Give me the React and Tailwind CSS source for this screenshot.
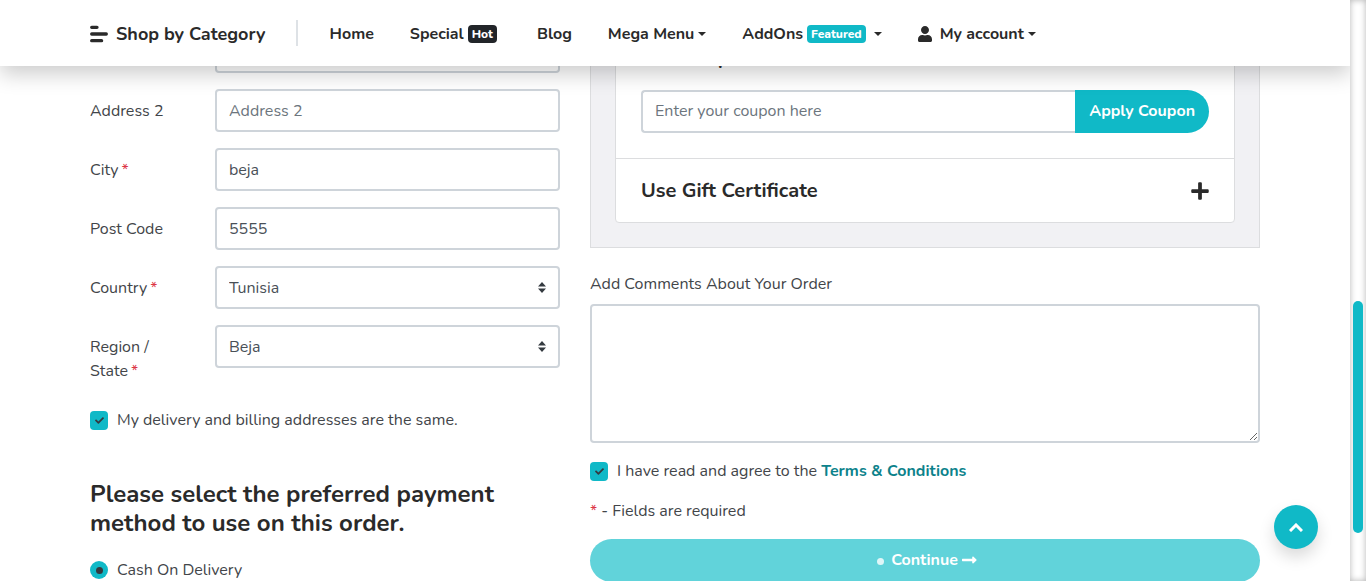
import React from "react";
import { FaUser, FaPlus, FaCheck } from "react-icons/fa";

const control =
  "block h-[43px] w-full rounded border-2 border-[#ced4da] bg-white px-3 text-base text-[#495057] placeholder:text-[#6c757d]";

function Caret() {
  return (
    <svg className="h-1 w-2 shrink-0" viewBox="0 0 8 4" fill="currentColor" aria-hidden="true">
      <path d="M0 0h8L4 4z" />
    </svg>
  );
}

function NavLink({ children }) {
  return (
    <a href="#" className="flex items-center whitespace-nowrap">
      {children}
    </a>
  );
}

function Required() {
  return <span className="text-[#dc3545]">*</span>;
}

function RequiredLabel({ children }) {
  return (
    <>
      {children}
      <span className="ml-[3px] text-[#dc3545]">*</span>
    </>
  );
}

function Row({ id, label, children }) {
  return (
    <div className="grid grid-cols-[95px_1fr] items-start gap-x-[30px]">
      <label htmlFor={id} className="pt-[10px]">
        {label}
      </label>
      {children}
    </div>
  );
}

function Select({ id, value }) {
  return (
    <div className="relative">
      <select id={id} defaultValue={value} className={control + " appearance-none pr-8"}>
        <option>{value}</option>
      </select>
      <svg
        className="pointer-events-none absolute top-4 right-[14px] h-[11px] w-2"
        viewBox="0 0 8 10"
        preserveAspectRatio="none"
        fill="#343a40"
        aria-hidden="true"
      >
        <path d="M4 0 0 4h8zM0 6l4 4 4-4z" />
      </svg>
    </div>
  );
}

function Tick({ id, children }) {
  return (
    <div className="flex items-center gap-[9px]">
      <span className="grid place-items-center">
        <input
          id={id}
          type="checkbox"
          defaultChecked
          className="col-start-1 row-start-1 h-[19px] w-[18px] appearance-none rounded bg-[#10b9c7]"
        />
        <FaCheck className="pointer-events-none col-start-1 row-start-1 size-[9px] text-[#343a40]" />
      </span>
      <label htmlFor={id}>{children}</label>
    </div>
  );
}

function Header() {
  return (
    <header className="relative z-10 h-[66px] shrink-0 bg-white text-[#2a2a2a] shadow-[0_8px_20px_rgba(0,0,0,0.2)]">
      <div className="mx-auto flex h-full w-full max-w-[1200px] items-center px-[15px] pt-0.5 font-bold">
        <button type="button" className="flex items-center gap-2 text-lg whitespace-nowrap">
          <svg className="h-[18px] w-[18px]" viewBox="0 0 18 18" stroke="currentColor" strokeWidth="3.3" strokeLinecap="round" aria-hidden="true">
            <path d="M1.700 2.300h5.300M1.700 9h14.600M1.700 15.700h9.900" />
          </svg>
          Shop by Category
        </button>
        <span className="mb-0.5 ml-[30px] h-[26px] w-0.5 bg-[#dee2e6]" />
        <nav className="ml-8 flex items-center gap-9">
          <NavLink>Home</NavLink>
          <NavLink>
            Special
            <span className="mr-1 ml-1 rounded bg-[#222529] px-1 text-xs leading-[18px] font-extrabold text-white">Hot</span>
          </NavLink>
          <NavLink>Blog</NavLink>
          <NavLink>
            <span className="mr-1">Mega Menu</span>
            <Caret />
          </NavLink>
          <NavLink>
            AddOns
            <span className="mr-2 ml-1 rounded bg-[#10b9c7] px-1 text-xs leading-[18px] font-extrabold text-white">Featured</span>
            <Caret />
          </NavLink>
          <NavLink>
            <FaUser className="mr-2 h-4 w-[14px]" />
            <span className="mr-1">My account</span>
            <Caret />
          </NavLink>
        </nav>
      </div>
    </header>
  );
}

function AddressForm() {
  return (
    <section className="col-span-5 px-[15px] pt-[37px]">
      <div className="flex flex-col gap-4">
        <div className="pl-[125px]">
          <input aria-label="Address 1" type="text" className={control} />
        </div>
        <Row id="address2" label="Address 2">
          <input id="address2" type="text" placeholder="Address 2" className={control} />
        </Row>
        <Row id="city" label={<RequiredLabel>City</RequiredLabel>}>
          <input id="city" type="text" defaultValue="beja" className={control} />
        </Row>
        <Row id="postcode" label="Post Code">
          <input id="postcode" type="text" defaultValue="5555" className={control} />
        </Row>
        <Row id="country" label={<RequiredLabel>Country</RequiredLabel>}>
          <Select id="country" value="Tunisia" />
        </Row>
        <Row id="region" label={<RequiredLabel>Region / State</RequiredLabel>}>
          <Select id="region" value="Beja" />
        </Row>
      </div>
      <div className="mt-[25px]">
        <Tick id="same">My delivery and billing addresses are the same.</Tick>
      </div>
      <h2 className="mt-12 text-2xl leading-[29px] font-bold text-[#2a2a2a]">
        Please select the preferred payment method to use on this order.
      </h2>
      <div className="mt-5 flex items-center gap-[9px]">
        <span className="grid place-items-center">
          <input
            id="cod"
            type="radio"
            name="payment"
            defaultChecked
            className="col-start-1 row-start-1 size-[18px] appearance-none rounded-full bg-[#10b9c7]"
          />
          <span className="pointer-events-none col-start-1 row-start-1 size-[7px] rounded-full bg-[#343a40]" />
        </span>
        <label htmlFor="cod">Cash On Delivery</label>
      </div>
    </section>
  );
}

function OrderPanel() {
  return (
    <section className="col-span-7 px-[15px]">
      <div className="border border-[#dcdddf] bg-[#f1f1f4] p-6">
        <div className="rounded border border-[#dcdddf] bg-white">
          <div className="px-[25px] pt-[27px] pb-[25px]">
            <h3>
              <label htmlFor="coupon" className="block text-xl leading-6 font-bold text-[#2a2a2a]">
                Use Coupon Code
              </label>
            </h3>
            <div className="mt-5 flex">
              <input
                id="coupon"
                type="text"
                placeholder="Enter your coupon here"
                className="h-[43px] min-w-0 flex-1 rounded-l border-2 border-r-0 border-[#ced4da] px-3 pb-0.5 placeholder:text-[#6c757d]"
              />
              <button type="button" className="h-[43px] rounded-r-full bg-[#10b9c7] px-[14px] pb-0.5 font-bold whitespace-nowrap text-white">
                Apply Coupon
              </button>
            </div>
          </div>
          <button
            type="button"
            className="flex h-16 w-full items-center justify-between border-t border-[#dcdddf] px-[25px] text-xl font-bold text-[#2a2a2a]"
          >
            Use Gift Certificate
            <FaPlus className="h-5 w-[18px]" aria-hidden="true" />
          </button>
        </div>
      </div>
      <label htmlFor="comments" className="mt-6 mb-2 block">
        Add Comments About Your Order
      </label>
      <textarea id="comments" className="block h-[139px] w-full resize rounded border-2 border-[#ced4da] bg-white px-3 py-2" />
      <div className="mt-4">
        <Tick id="terms">
          I have read and agree to the{" "}
          <a href="#" className="font-bold text-[#0c828b]">
            Terms &amp; Conditions
          </a>
        </Tick>
      </div>
      <p className="mt-4">
        <Required /> - Fields are required
      </p>
      <button
        type="button"
        className="mt-4 flex h-[43px] w-full items-center justify-center rounded-full bg-[#61d3da] pb-0.5 pl-1 font-bold text-white"
      >
        <span className="mt-1 mr-[7px] size-[7px] rounded-full bg-white/80" />
        Continue
        <svg className="ml-1 h-2 w-[15px]" viewBox="0 0 15 8" fill="currentColor" aria-hidden="true">
          <path d="M.5 2.800h9.700V1.200c0-.7.8-1 1.300-.5l2.900 2.800c.3.300.3.700 0 1l-2.900 2.800c-.5.500-1.300.100-1.300-.5V5.200H.5C.2 5.200 0 5 0 4.700V3.300c0-.3.200-.5.500-.5z" />
        </svg>
      </button>
    </section>
  );
}

export default function App() {
  return (
    <div className="flex h-screen overflow-hidden bg-white font-[Nunito,sans-serif] text-base text-[#424549]">
      <div className="relative flex min-w-0 flex-1 flex-col overflow-hidden">
        <Header />
        <main className="min-h-0 flex-1">
          <div className="mx-auto -mt-[73px] grid max-w-[1200px] grid-cols-12 items-start">
            <AddressForm />
            <OrderPanel />
          </div>
        </main>
        <button
          type="button"
          aria-label="Back to top"
          className="absolute right-8 bottom-8 z-20 grid size-11 place-items-center rounded-full bg-[#10b9c7] text-white shadow-[0_8px_16px_rgba(0,0,0,0.15)]"
        >
          <svg className="h-[9px] w-[14px]" viewBox="0 0 14 9" fill="none" stroke="currentColor" strokeWidth="3" aria-hidden="true">
            <path d="M1 8l6-6 6 6" />
          </svg>
        </button>
      </div>
      <div className="flex w-4 shrink-0 flex-col bg-white px-[3px] shadow-[inset_0_0_6px_rgba(0,0,0,0.3)]" aria-hidden="true">
        <div className="grow-[301] basis-0" />
        <div className="grow-[232] basis-0 rounded-full bg-[#10b9c7]" />
        <div className="grow-[48] basis-0" />
      </div>
    </div>
  );
}
